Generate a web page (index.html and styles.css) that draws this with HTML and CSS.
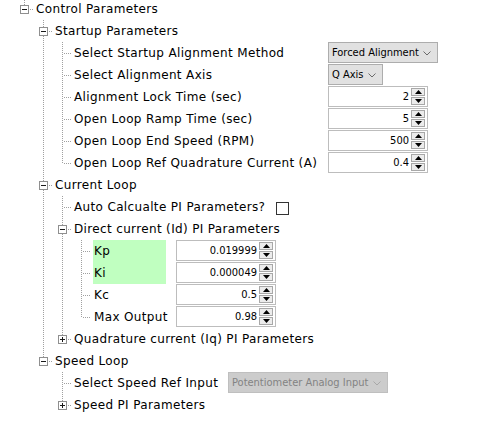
FILE: index.html
```html
<!DOCTYPE html>
<html>
<head>
<meta charset="utf-8">
<link rel="stylesheet" href="styles.css">
</head>
<body>
<div class="tree">
  <div class="row">
    <span class="n last"><span class="bx minus"></span></span>
    <span class="lbl">Control Parameters</span>
  </div>
  <div class="row">
    <span class="g"></span>
    <span class="n mid"><span class="bx minus"></span></span>
    <span class="lbl">Startup Parameters</span>
  </div>
  <div class="row">
    <span class="g"></span><span class="g v"></span>
    <span class="n mid"></span>
    <span class="lbl w-start">Select Startup Alignment Method</span>
    <div class="sel w-forced"><span class="sel-text">Forced Alignment</span><svg class="chev" width="8" height="5" viewBox="0 0 8 5"><path d="M0.5 0.5 L4 4 L7.5 0.5" fill="none" stroke="#6b6b6b" stroke-width="1"/></svg></div>
  </div>
  <div class="row">
    <span class="g"></span><span class="g v"></span>
    <span class="n mid"></span>
    <span class="lbl w-start">Select Alignment Axis</span>
    <div class="sel w-axis"><span class="sel-text">Q Axis</span><svg class="chev" width="8" height="5" viewBox="0 0 8 5"><path d="M0.5 0.5 L4 4 L7.5 0.5" fill="none" stroke="#6b6b6b" stroke-width="1"/></svg></div>
  </div>
  <div class="row">
    <span class="g"></span><span class="g v"></span>
    <span class="n mid"></span>
    <span class="lbl w-start">Alignment Lock Time (sec)</span>
    <div class="num"><span class="val">2</span><span class="spin"><span class="btn"><svg width="7" height="4" viewBox="0 0 7 4"><path d="M3.5 0 L7 4 L0 4 Z" fill="#000"/></svg></span><span class="btn"><svg width="7" height="4" viewBox="0 0 7 4"><path d="M0 0 L7 0 L3.5 4 Z" fill="#000"/></svg></span></span></div>
  </div>
  <div class="row">
    <span class="g"></span><span class="g v"></span>
    <span class="n mid"></span>
    <span class="lbl w-start">Open Loop Ramp Time (sec)</span>
    <div class="num"><span class="val">5</span><span class="spin"><span class="btn"><svg width="7" height="4" viewBox="0 0 7 4"><path d="M3.5 0 L7 4 L0 4 Z" fill="#000"/></svg></span><span class="btn"><svg width="7" height="4" viewBox="0 0 7 4"><path d="M0 0 L7 0 L3.5 4 Z" fill="#000"/></svg></span></span></div>
  </div>
  <div class="row">
    <span class="g"></span><span class="g v"></span>
    <span class="n mid"></span>
    <span class="lbl w-start">Open Loop End Speed (RPM)</span>
    <div class="num"><span class="val">500</span><span class="spin"><span class="btn"><svg width="7" height="4" viewBox="0 0 7 4"><path d="M3.5 0 L7 4 L0 4 Z" fill="#000"/></svg></span><span class="btn"><svg width="7" height="4" viewBox="0 0 7 4"><path d="M0 0 L7 0 L3.5 4 Z" fill="#000"/></svg></span></span></div>
  </div>
  <div class="row">
    <span class="g"></span><span class="g v"></span>
    <span class="n last"></span>
    <span class="lbl w-start">Open Loop Ref Quadrature Current (A)</span>
    <div class="num"><span class="val">0.4</span><span class="spin"><span class="btn"><svg width="7" height="4" viewBox="0 0 7 4"><path d="M3.5 0 L7 4 L0 4 Z" fill="#000"/></svg></span><span class="btn"><svg width="7" height="4" viewBox="0 0 7 4"><path d="M0 0 L7 0 L3.5 4 Z" fill="#000"/></svg></span></span></div>
  </div>
  <div class="row">
    <span class="g"></span>
    <span class="n mid"><span class="bx minus"></span></span>
    <span class="lbl">Current Loop</span>
  </div>
  <div class="row">
    <span class="g"></span><span class="g v"></span>
    <span class="n mid"></span>
    <span class="lbl w-auto">Auto Calcualte PI Parameters?</span>
    <span class="chk"></span>
  </div>
  <div class="row">
    <span class="g"></span><span class="g v"></span>
    <span class="n mid"><span class="bx minus"></span></span>
    <span class="lbl">Direct current (Id) PI Parameters</span>
  </div>
  <div class="row">
    <span class="g"></span><span class="g v"></span><span class="g v"></span>
    <span class="n mid"></span>
    <span class="lbl w-pi hl">Kp</span>
    <div class="num"><span class="val">0.019999</span><span class="spin"><span class="btn"><svg width="7" height="4" viewBox="0 0 7 4"><path d="M3.5 0 L7 4 L0 4 Z" fill="#000"/></svg></span><span class="btn"><svg width="7" height="4" viewBox="0 0 7 4"><path d="M0 0 L7 0 L3.5 4 Z" fill="#000"/></svg></span></span></div>
  </div>
  <div class="row">
    <span class="g"></span><span class="g v"></span><span class="g v"></span>
    <span class="n mid"></span>
    <span class="lbl w-pi hl">Ki</span>
    <div class="num"><span class="val">0.000049</span><span class="spin"><span class="btn"><svg width="7" height="4" viewBox="0 0 7 4"><path d="M3.5 0 L7 4 L0 4 Z" fill="#000"/></svg></span><span class="btn"><svg width="7" height="4" viewBox="0 0 7 4"><path d="M0 0 L7 0 L3.5 4 Z" fill="#000"/></svg></span></span></div>
  </div>
  <div class="row">
    <span class="g"></span><span class="g v"></span><span class="g v"></span>
    <span class="n mid"></span>
    <span class="lbl w-pi">Kc</span>
    <div class="num"><span class="val">0.5</span><span class="spin"><span class="btn"><svg width="7" height="4" viewBox="0 0 7 4"><path d="M3.5 0 L7 4 L0 4 Z" fill="#000"/></svg></span><span class="btn"><svg width="7" height="4" viewBox="0 0 7 4"><path d="M0 0 L7 0 L3.5 4 Z" fill="#000"/></svg></span></span></div>
  </div>
  <div class="row">
    <span class="g"></span><span class="g v"></span><span class="g v"></span>
    <span class="n last"></span>
    <span class="lbl w-pi">Max Output</span>
    <div class="num"><span class="val">0.98</span><span class="spin"><span class="btn"><svg width="7" height="4" viewBox="0 0 7 4"><path d="M3.5 0 L7 4 L0 4 Z" fill="#000"/></svg></span><span class="btn"><svg width="7" height="4" viewBox="0 0 7 4"><path d="M0 0 L7 0 L3.5 4 Z" fill="#000"/></svg></span></span></div>
  </div>
  <div class="row">
    <span class="g"></span><span class="g v"></span>
    <span class="n last"><span class="bx plus"></span></span>
    <span class="lbl">Quadrature current (Iq) PI Parameters</span>
  </div>
  <div class="row">
    <span class="g"></span>
    <span class="n last"><span class="bx minus"></span></span>
    <span class="lbl">Speed Loop</span>
  </div>
  <div class="row">
    <span class="g"></span><span class="g"></span>
    <span class="n mid"></span>
    <span class="lbl w-speed">Select Speed Ref Input</span>
    <div class="sel w-pot disabled"><span class="sel-text">Potentiometer Analog Input</span><svg class="chev" width="8" height="5" viewBox="0 0 8 5"><path d="M0.5 0.5 L4 4 L7.5 0.5" fill="none" stroke="#a8a8a8" stroke-width="1"/></svg></div>
  </div>
  <div class="row">
    <span class="g"></span><span class="g"></span>
    <span class="n last"><span class="bx plus"></span></span>
    <span class="lbl">Speed PI Parameters</span>
  </div>
</div>
</body>
</html>
```
FILE: styles.css
```css
html, body {
  margin: 0;
  padding: 0;
  background: #ffffff;
}

body {
  font-family: "DejaVu Sans", Verdana, sans-serif;
  font-size: 12px;
  color: #000;
}

.tree {
  padding-left: 15px;
  margin-top: -2px;
}

.row {
  display: flex;
  align-items: flex-start;
  height: 22px;
}

.g, .n {
  position: relative;
  flex: none;
  width: 19px;
  height: 22px;
}

.g.v::before,
.n::before {
  content: "";
  position: absolute;
  left: 9px;
  top: 0;
  width: 1px;
  height: 22px;
  background: repeating-linear-gradient(to bottom, #a0a0a0 0 1px, transparent 1px 2px);
}

.n.last::before {
  height: 11px;
}

.n::after {
  content: "";
  position: absolute;
  left: 10px;
  top: 11px;
  width: 9px;
  height: 1px;
  background: repeating-linear-gradient(to right, transparent 0 1px, #a0a0a0 1px 2px);
}

.bx {
  position: absolute;
  left: 5px;
  top: 7px;
  width: 9px;
  height: 9px;
  box-sizing: border-box;
  border: 1px solid #8f8f8f;
  background: #fff;
  z-index: 1;
}

.bx::before {
  content: "";
  position: absolute;
  left: 1px;
  top: 3px;
  width: 5px;
  height: 1px;
  background: #1a1a1a;
}

.bx.plus::after {
  content: "";
  position: absolute;
  left: 3px;
  top: 1px;
  width: 1px;
  height: 5px;
  background: #1a1a1a;
}

.lbl {
  flex: none;
  box-sizing: border-box;
  height: 22px;
  line-height: 22px;
  padding-left: 2px;
  white-space: nowrap;
  letter-spacing: 0.35px;
}

.w-start { width: 256px; }
.w-auto { width: 204px; }
.w-speed { width: 156px; }

.w-pi {
  width: 73px;
  margin-left: 2px;
  margin-right: 10px;
  padding-left: 1px;
}

.hl {
  background: #c0ffc0;
}

/* select boxes */
.sel {
  flex: none;
  box-sizing: border-box;
  display: flex;
  align-items: center;
  justify-content: space-between;
  height: 21px;
  border: 1px solid #adadad;
  background: #e1e1e1;
  padding: 0 6px 0 3px;
  font-family: "DejaVu Sans Condensed", "DejaVu Sans", sans-serif;
  font-stretch: condensed;
  font-size: 11px;
  color: #000;
}

.sel .chev {
  flex: none;
  margin-top: 1px;
}

.w-forced { width: 110px; }
.w-axis { width: 55px; }
.w-pot { width: 160px; }

.sel.disabled {
  background: #cccccc;
  border-color: #bfbfbf;
  color: #838383;
}

/* numeric spinner inputs */
.num {
  flex: none;
  box-sizing: border-box;
  display: flex;
  width: 100px;
  height: 21px;
  border: 1px solid #bdbdbd;
  background: #fff;
}

.val {
  flex: 1;
  text-align: right;
  padding-right: 2px;
  line-height: 19px;
  font-family: "DejaVu Sans Condensed", "DejaVu Sans", sans-serif;
  font-stretch: condensed;
  font-size: 11px;
  color: #000;
}

.spin {
  flex: none;
  display: flex;
  flex-direction: column;
  gap: 1px;
  width: 14px;
  padding: 1px 2px 1px 0;
}

.btn {
  flex: none;
  box-sizing: border-box;
  display: flex;
  align-items: center;
  justify-content: center;
  height: 8px;
  border: 1px solid #a8a8a8;
  background: #ececec;
}

.btn svg {
  display: block;
}

/* checkbox */
.chk {
  flex: none;
  box-sizing: border-box;
  width: 13px;
  height: 13px;
  margin-top: 6px;
  border: 1px solid #333333;
  background: #fff;
}
```
